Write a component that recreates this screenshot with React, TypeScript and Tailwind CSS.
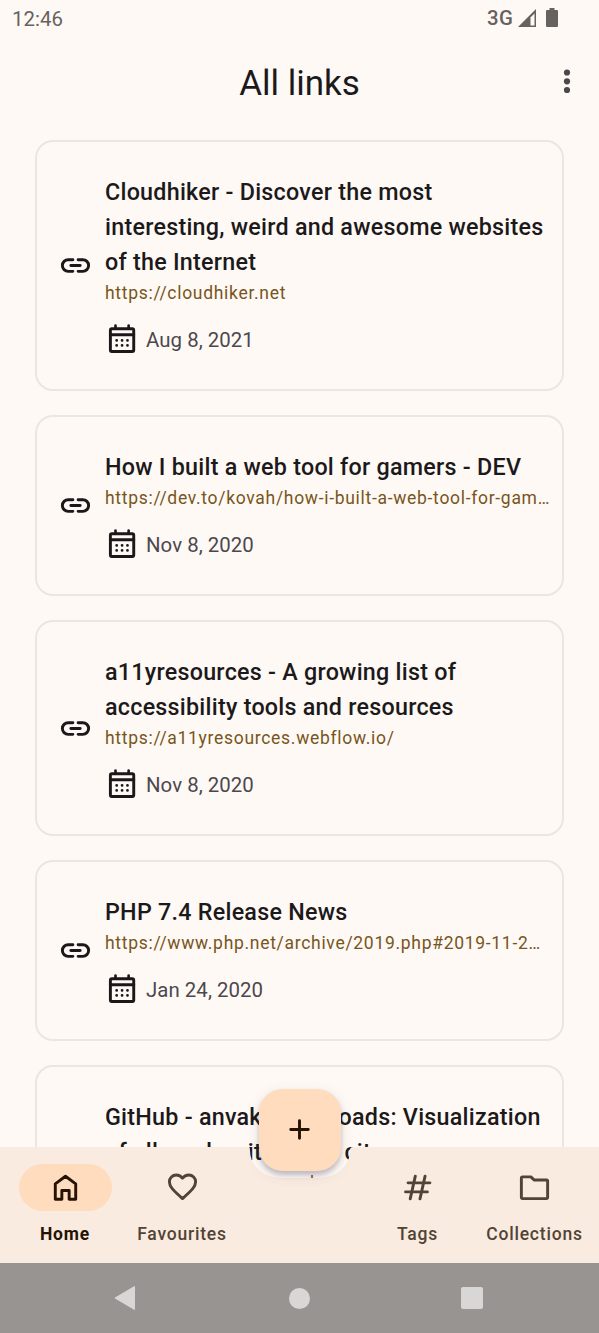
import React from "react";

type LinkItem = { title: string[]; url: string; date?: string };

const links: LinkItem[] = [
  {
    title: ["Cloudhiker - Discover the most", "interesting, weird and awesome websites", "of the Internet"],
    url: "https://cloudhiker.net",
    date: "Aug 8, 2021",
  },
  {
    title: ["How I built a web tool for gamers - DEV"],
    url: "https://dev.to/kovah/how-i-built-a-web-tool-for-gam…",
    date: "Nov 8, 2020",
  },
  {
    title: ["a11yresources - A growing list of", "accessibility tools and resources"],
    url: "https://a11yresources.webflow.io/",
    date: "Nov 8, 2020",
  },
  {
    title: ["PHP 7.4 Release News"],
    url: "https://www.php.net/archive/2019.php#2019-11-2…",
    date: "Jan 24, 2020",
  },
  {
    title: ["GitHub - anvaka/city-roads: Visualization", "of all roads within any city"],
    url: "https://github.com/anvaka/city-roads",
  },
];

function LinkIcon() {
  return (
    <svg className="h-[35px] w-[35px]" viewBox="0 0 24 24" fill="none" stroke="currentColor" strokeWidth="2" strokeLinecap="round">
      <path d="M10.2 8H7a4 4 0 0 0 0 8h3.2M13.8 8H17a4 4 0 0 1 0 8h-3.2M8.8 12h6.4" />
    </svg>
  );
}

function CalendarIcon() {
  return (
    <svg className="-mt-[2px] h-[35px] w-[35px]" viewBox="0 0 24 24" fill="none" stroke="currentColor" strokeWidth="2" strokeLinecap="round" strokeLinejoin="round">
      <rect x="3.7" y="4.6" width="16" height="15.6" rx="1" />
      <path d="M3.7 8.7h16" />
      <path d="M7.2 2.4V4.6M16.2 2.4V4.6" strokeWidth="1.8" />
      <path d="M8 12.6h.01M11.7 12.6h.01M15.4 12.6h.01M8 16.1h.01M11.7 16.1h.01M15.4 16.1h.01" strokeWidth="1.9" />
    </svg>
  );
}

function LinkCard({ item }: { item: LinkItem }) {
  return (
    <article className="flex shrink-0 items-center rounded-[18px] border-2 border-[#eae6e2] pt-[33px] pb-[31px] pl-[21px]">
      <div className="-mt-[2px] flex w-[35px] shrink-0 text-[#1c1718]">
        <LinkIcon />
      </div>
      <div className="ml-[12px] min-w-0 flex-1">
        <h2 className="text-[23.3px] leading-[35px] font-medium tracking-[0.25px] whitespace-nowrap text-[#1c191b]">
          {item.title.map((line) => (
            <span key={line} className="block">{line}</span>
          ))}
        </h2>
        <p className="text-[17.5px] leading-[26px] tracking-[0.7px] whitespace-nowrap text-[#775520]">{item.url}</p>
        <div className="mt-[17px] flex h-[35px] items-center text-[#1c1718]">
          <CalendarIcon />
          {item.date && <span className="ml-[6px] text-[20.4px] tracking-[0.05px] text-[#4b484d]">{item.date}</span>}
        </div>
      </div>
    </article>
  );
}

function NavItem({ label, active, children }: { label: string; active?: boolean; children: React.ReactNode }) {
  return (
    <div className={active ? "flex w-[117px] flex-col items-center text-[#251305]" : "flex w-[117px] flex-col items-center text-[#524335]"}>
      <div className={active ? "flex h-[47px] w-[93px] items-center justify-center rounded-full bg-[#ffdcbe]" : "flex h-[47px] w-[93px] items-center justify-center"}>
        <svg className="h-[35px] w-[35px]" viewBox="0 0 24 24" fill="none" stroke="currentColor" strokeWidth="2" strokeLinecap="round" strokeLinejoin="round">
          {children}
        </svg>
      </div>
      <span className={active ? "mt-[12px] text-[17.5px] leading-[23px] font-bold tracking-[0.8px]" : "mt-[12px] text-[17.5px] leading-[23px] font-medium tracking-[0.8px]"}>{label}</span>
    </div>
  );
}

export default function App() {
  return (
    <div className="relative flex h-[1333px] w-[599px] flex-col overflow-hidden bg-[#fff9f5] font-['Roboto',sans-serif]">
      <header className="flex h-[36px] shrink-0 items-center justify-between pr-[41px] pl-[12px] text-[#666260]">
        <span className="pt-[2px] text-[20.4px] tracking-[0.05px]">12:46</span>
        <div className="flex items-center">
          <span className="text-[20.4px] font-medium tracking-[0.2px]">3G</span>
          <svg className="ml-[5px] h-[18px] w-[18px]" viewBox="0 0 18 18">
            <path d="M0 18L18 0v18z" fill="currentColor" />
            <path d="M12.5 8.5L16.5 4.5v12h-4z" fill="#fff9f5" />
          </svg>
          <svg className="ml-[10px] h-[19px] w-[12px]" viewBox="0 0 12 19" fill="currentColor">
            <path d="M3.5 0h5v2H11a1 1 0 0 1 1 1v15a1 1 0 0 1-1 1H1a1 1 0 0 1-1-1V3a1 1 0 0 1 1-1h2.5z" />
          </svg>
        </div>
      </header>

      <div className="grid h-[92px] shrink-0 grid-cols-[1fr_auto_1fr] items-center">
        <h1 className="col-start-2 pt-[5px] text-[35px] text-[#1c191b]">All links</h1>
        <svg className="mr-[27px] h-[26px] w-[10px] justify-self-end" viewBox="0 0 10 26" fill="#4b484d">
          <circle cx="5" cy="3.5" r="3.1" /><circle cx="5" cy="12.3" r="3.1" /><circle cx="5" cy="21" r="3.1" />
        </svg>
      </div>

      <main className="flex h-[1135px] shrink-0 flex-col gap-[24px] overflow-hidden px-[35px] pt-[12px]">
        {links.map((item) => <LinkCard key={item.url} item={item} />)}
      </main>

      <nav className="absolute top-[1147px] left-0 flex h-[116px] w-[599px] justify-between bg-[#f9ebe0] pt-[17px] pr-[6px] pl-[6.5px] [clip-path:path('M0_0H247Q250_0_250_3C250_20_264_31_282_31H318C336_31_350_20_350_3Q350_0_353_0H599V116H0Z')]">
        <div className="flex">
          <NavItem label="Home" active>
            <path d="M5 20V9.5L12 4.3l7 5.2V20h-4.5v-6h-5v6z" />
          </NavItem>
          <NavItem label="Favourites">
            <path d="M12 20.2L10.9 19.2C6.2 14.9 3 12.2 3 8.7A4.7 4.7 0 0 1 7.7 4c1.7 0 3.3.8 4.3 2.2C13 4.8 14.6 4 16.3 4A4.7 4.7 0 0 1 21 8.7c0 3.5-3.2 6.2-7.9 10.5z" transform="translate(0 -.6)" />
          </NavItem>
        </div>
        <div className="flex">
          <NavItem label="Tags">
            <path d="M5.5 8.8H20.5M3.8 15H18.8M10.5 4.2L7 19.8M17.2 4.2L13.7 19.8" />
          </NavItem>
          <NavItem label="Collections">
            <path d="M3 18.8V5.5a.8.8 0 0 1 .8-.8H9.5l2.2 2.1H20.2a.8.8 0 0 1 .8.8v11.2a.8.8 0 0 1-.8.8H3.8a.8.8 0 0 1-.8-.8z" />
          </NavItem>
        </div>
      </nav>

      <button className="absolute top-[1088.5px] left-[258.5px] flex h-[82px] w-[82px] items-center justify-center rounded-[24px] bg-[#ffdcbe] text-[#251305] shadow-[0_4px_5px_rgba(70,70,95,0.28),0_4px_14px_rgba(70,70,95,0.12)]">
        <svg className="h-[35px] w-[35px]" viewBox="0 0 24 24" fill="none" stroke="currentColor" strokeWidth="2" strokeLinecap="round">
          <path d="M12 6v12M6 12h12" />
        </svg>
      </button>

      <footer className="flex h-[70px] shrink-0 items-center bg-[#989491] pl-[113px] text-[#d9d7d5]">
        <svg className="h-[26px] w-[24px]" viewBox="0 0 24 26" fill="currentColor" stroke="currentColor" strokeLinejoin="round"><path d="M2 13L21.5 1.5V24.5Z" /></svg>
        <div className="ml-[152px] h-[21px] w-[21px] rounded-full bg-[#d9d7d5]" />
        <div className="ml-[151px] h-[22px] w-[22px] rounded-[2px] bg-[#d9d7d5]" />
      </footer>
    </div>
  );
}
